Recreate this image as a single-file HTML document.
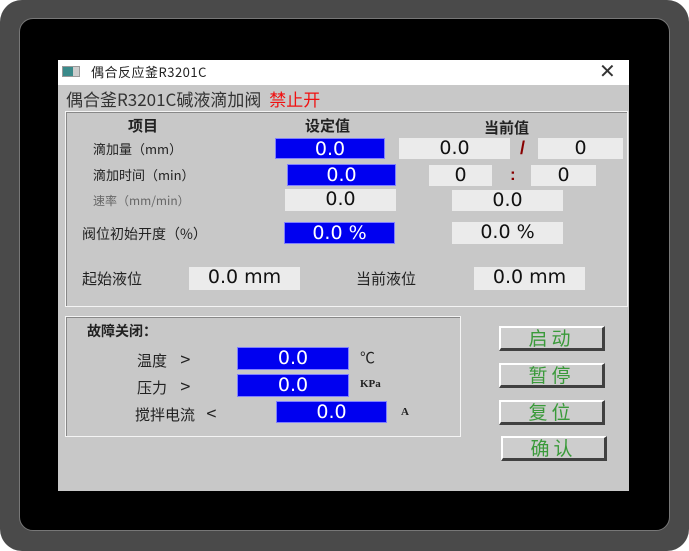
<!DOCTYPE html>
<html><head><meta charset="utf-8"><style>
*{margin:0;padding:0;box-sizing:border-box}
body{width:689px;height:551px;background:#fff;position:relative;overflow:hidden;font-family:"Liberation Sans","Noto Sans CJK SC",sans-serif}
.a{position:absolute}
.outer{left:0;top:0;width:689px;height:551px;background:#4a4a4a;border-radius:22px}
.inner{left:19px;top:18px;width:651px;height:513px;background:#000;border:1px solid #777;border-radius:14px}
.win{left:58px;top:60px;width:571px;height:431px;background:#c8c8c8}
.tb{left:58px;top:60px;width:571px;height:25px;background:#fff}
.t{white-space:nowrap;color:#222}
.cj{font-family:"Noto Sans CJK SC",sans-serif;line-height:1.15}
.blue{background:#0000f0;color:#fff;text-align:center;font-size:19px;line-height:21px;border:1px solid #8080ff;font-family:"DejaVu Sans",sans-serif}
.gray{background:#ebebeb;color:#111;text-align:center;font-size:19px;line-height:21px;font-family:"DejaVu Sans",sans-serif}
.grp{border:1px solid #f4f4f4;box-shadow:inset 1px 1px 0 #888}
.btn{width:106px;height:25px;background:#cdcdcd;border-top:2px solid #fff;border-left:2px solid #fff;border-right:3px solid #404040;border-bottom:3px solid #404040;color:#3a9a3a;font-size:19px;line-height:19px;text-align:center;letter-spacing:4px;font-family:"Noto Sans CJK SC",sans-serif}
.lbl{font-size:14px;font-family:"Noto Sans CJK SC",sans-serif;color:#222;white-space:nowrap;line-height:1.15}
</style></head><body>
<div class="a outer"></div>
<div class="a inner"></div>
<div class="a win"></div>
<div class="a tb"></div>
<div class="a" style="left:62px;top:66px;width:18px;height:11px;background:#ccc;border:1px solid #999"><div style="width:10px;height:9px;background:#3a8a8a"></div></div>
<div class="a t cj" style="left:91px;top:65px;font-size:13px;letter-spacing:0.5px">偶合反应釜R3201C</div>
<div class="a t" style="left:599px;top:59px;font-size:20px;color:#333">✕</div>
<div class="a t cj" style="left:66px;top:89px;font-size:17px;color:#333">偶合釜R3201C碱液滴加阀 <span style="color:#f01010;margin-left:4px">禁止开</span></div>
<div class="a grp" style="left:65px;top:111px;width:563px;height:196px"></div>
<div class="a lbl" style="left:128px;top:117px;font-weight:bold;font-size:15px">项目</div>
<div class="a lbl" style="left:305px;top:117px;font-weight:bold;font-size:15px">设定值</div>
<div class="a lbl" style="left:484px;top:119px;font-weight:bold;font-size:15px">当前值</div>

<div class="a lbl" style="left:93px;top:142px;font-size:13px">滴加量（mm）</div>
<div class="a blue" style="left:275px;top:138px;width:110px;height:21px">0.0</div>
<div class="a gray" style="left:399px;top:138px;width:111px;height:21px">0.0</div>
<div class="a t" style="left:520px;top:138px;font-size:18px;color:#800;font-weight:bold">/</div>
<div class="a gray" style="left:538px;top:138px;width:85px;height:21px">0</div>

<div class="a lbl" style="left:93px;top:168px;font-size:13px">滴加时间（min）</div>
<div class="a blue" style="left:287px;top:164px;width:109px;height:22px">0.0</div>
<div class="a gray" style="left:429px;top:165px;width:63px;height:21px">0</div>
<div class="a t" style="left:510px;top:165px;font-size:17px;color:#800;font-weight:bold">:</div>
<div class="a gray" style="left:531px;top:165px;width:65px;height:21px">0</div>

<div class="a lbl" style="left:93px;top:194px;font-size:12px;color:#666">速率（mm/min）</div>
<div class="a gray" style="left:285px;top:189px;width:111px;height:22px">0.0</div>
<div class="a gray" style="left:452px;top:190px;width:111px;height:21px">0.0</div>

<div class="a lbl" style="left:82px;top:226px">阀位初始开度（%）</div>
<div class="a blue" style="left:284px;top:222px;width:111px;height:22px">0.0 %</div>
<div class="a gray" style="left:452px;top:222px;width:111px;height:22px">0.0 %</div>

<div class="a lbl" style="left:82px;top:270px;font-size:15px">起始液位</div>
<div class="a gray" style="left:189px;top:267px;width:111px;height:23px">0.0 mm</div>
<div class="a lbl" style="left:356px;top:270px;font-size:15px">当前液位</div>
<div class="a gray" style="left:474px;top:267px;width:111px;height:23px">0.0 mm</div>

<div class="a grp" style="left:65px;top:316px;width:396px;height:121px"></div>
<div class="a lbl" style="left:87px;top:323px;font-weight:bold;font-size:14px">故障关闭：</div>
<div class="a lbl" style="left:137px;top:349px;font-size:15px">温度 <span style="margin-left:10px;font-size:18px">&gt;</span></div>
<div class="a blue" style="left:237px;top:347px;width:112px;height:23px">0.0</div>
<div class="a lbl" style="left:360px;top:349px;font-size:15px">℃</div>
<div class="a lbl" style="left:137px;top:376px;font-size:15px">压力 <span style="margin-left:10px;font-size:18px">&gt;</span></div>
<div class="a blue" style="left:237px;top:374px;width:112px;height:23px">0.0</div>
<div class="a t" style="left:360px;top:378px;font-size:11px;font-family:'Liberation Serif',serif;font-weight:bold">KPa</div>
<div class="a lbl" style="left:135px;top:403px;font-size:15px">搅拌电流 <span style="margin-left:8px;font-size:18px">&lt;</span></div>
<div class="a blue" style="left:276px;top:401px;width:111px;height:22px">0.0</div>
<div class="a t" style="left:401px;top:406px;font-size:11px;font-family:'Liberation Serif',serif;font-weight:bold">A</div>

<div class="a btn" style="left:499px;top:326px">启动</div>
<div class="a btn" style="left:499px;top:363px">暂停</div>
<div class="a btn" style="left:499px;top:400px">复位</div>
<div class="a btn" style="left:501px;top:436px">确认</div>
</body></html>
